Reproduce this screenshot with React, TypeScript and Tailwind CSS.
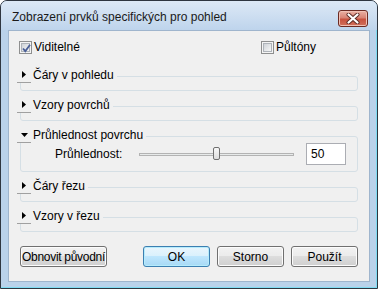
const font = "font-['Liberation_Sans',Arial,sans-serif]";

function CheckBox({ checked }: { checked?: boolean }) {
  return (
    <span className="relative flex h-[13px] w-[13px] shrink-0 items-center justify-center border border-[#8e8f8f] bg-[#f4f4f4]">
      <span className="h-[9px] w-[9px] border border-[#aeb3b9] bg-gradient-to-br from-[#cfd3d8] to-[#f7f7f7]" />
      {checked ? (
        <svg
          className="absolute left-[1px] top-[1px]"
          width="11"
          height="11"
          viewBox="0 0 11 11"
          aria-hidden="true"
        >
          <path
            d="M2 5.5 L4.3 8.2 L9 1.8"
            fill="none"
            stroke="#4a5f97"
            strokeWidth="1.8"
          />
        </svg>
      ) : null}
    </span>
  );
}

function Expander({ open }: { open?: boolean }) {
  return (
    <span className="flex h-[16px] w-[14px] shrink-0 items-center justify-center border-b border-[#a0a0a0]">
      {open ? (
        <svg width="7" height="4" viewBox="0 0 7 4" aria-hidden="true">
          <polygon points="0,0 7,0 3.5,4" fill="#000" />
        </svg>
      ) : (
        <svg width="4" height="7" viewBox="0 0 4 7" aria-hidden="true">
          <polygon points="0,0 4,3.5 0,7" fill="#000" />
        </svg>
      )}
    </span>
  );
}

function Section({
  title,
  open,
  children,
}: {
  title: string;
  open?: boolean;
  children?: React.ReactNode;
}) {
  return (
    <div
      className={`rounded-[3px] border border-[#d5dfe5] ${
        open ? "pb-[6px]" : "h-[15px]"
      }`}
    >
      <div className="-ml-[4px] -mt-[10px] flex h-[16px] w-fit items-center bg-[#f0f0f0] pr-[3px]">
        <Expander open={open} />
        <span className="ml-[2px] text-[12px] leading-[16px] text-black">
          {title}
        </span>
      </div>
      {children}
    </div>
  );
}

function Button({
  label,
  primary,
  className = "",
}: {
  label: string;
  primary?: boolean;
  className?: string;
}) {
  return (
    <button
      type="button"
      className={`flex h-[21px] items-center justify-center whitespace-nowrap rounded-[3px] border px-0 text-[12px] leading-none text-black ${
        primary
          ? "border-[#3c7fb1] bg-[linear-gradient(#eaf6fd_0%,#d9f0fc_50%,#bee6fd_50%,#a7d9f5_100%)] shadow-[inset_0_0_0_1px_#b6ecfc]"
          : "border-[#707070] bg-[linear-gradient(#f2f2f2_0%,#ebebeb_50%,#dddddd_50%,#cfcfcf_100%)] shadow-[inset_0_0_0_1px_#fcfcfc]"
      } ${className}`}
    >
      {label}
    </button>
  );
}

export default function App() {
  return (
    <div className={`h-[289px] w-[378px] overflow-hidden bg-white ${font}`}>
      <div className="flex h-full w-full flex-col rounded-t-[7px] border border-[#2f3640] bg-[#bad2ea] shadow-[inset_-1px_-1px_0_#7fdcf3]">
        <div className="flex h-[29px] shrink-0 items-start justify-between rounded-t-[6px] bg-gradient-to-b from-[#dde9f6] to-[#bed4ec] pl-[11px] pr-[9px]">
          <span className="mt-[8px] text-[12px] leading-[16px] text-[#1a1a1a]">
            Zobrazení prvků specifických pro pohled
          </span>
          <button
            type="button"
            aria-label="Zavřít"
            className="mt-[9px] flex h-[17px] w-[30px] items-center justify-center rounded-[3px] border border-[#6b2a22] bg-[linear-gradient(#eab1a4_0%,#d98475_45%,#c8523f_55%,#d0705c_100%)] shadow-[inset_0_0_0_1px_#f0c0b4]"
          >
            <svg width="14" height="11" viewBox="0 0 14 11" aria-hidden="true">
              <path
                d="M2.5 1.5 L11.5 9.5 M11.5 1.5 L2.5 9.5"
                stroke="#5a2a24"
                strokeWidth="4"
                strokeLinecap="round"
              />
              <path
                d="M2.5 1.5 L11.5 9.5 M11.5 1.5 L2.5 9.5"
                stroke="#ffffff"
                strokeWidth="2.2"
                strokeLinecap="round"
              />
            </svg>
          </button>
        </div>

        <div className="mx-[7px] flex flex-1 flex-col border border-[#9fb5cd] bg-[#f0f0f0] pt-[10px]">
          <div className="flex items-center pl-[10px]">
            <label className="flex w-[242px] items-center gap-[2px] text-[12px] leading-[13px] text-black">
              <CheckBox checked />
              Viditelné
            </label>
            <label className="flex items-center gap-[2px] text-[12px] leading-[13px] text-black">
              <CheckBox />
              Půltóny
            </label>
          </div>

          <div className="mt-[22px] flex flex-col gap-[15px] px-[11px]">
            <Section title="Čáry v pohledu" />
            <Section title="Vzory povrchů" />
            <Section title="Průhlednost povrchu" open>
              <div className="flex h-[22px] items-center pl-[34px]">
                <span className="w-[84px] text-[12px] leading-none text-black">
                  Průhlednost:
                </span>
                <div className="relative flex h-[22px] w-[155px] items-center">
                  <div className="h-[3px] w-full border border-[#b3b3b3] bg-[#e7eaea]" />
                  <div className="absolute left-[74px] top-[4px] h-[13px] w-[7px] rounded-[2px] border border-[#707070] bg-gradient-to-b from-[#f8f8f8] to-[#dcdcdc]" />
                </div>
                <div className="ml-[12px] flex h-[22px] w-[40px] items-center border border-[#abadb3] bg-white pl-[4px] text-[12px] text-black">
                  50
                </div>
              </div>
            </Section>
            <Section title="Čáry řezu" />
            <Section title="Vzory v řezu" />
          </div>

          <div className="mt-[14px] flex items-center px-[11px]">
            <Button
              label="Obnovit původní"
              className="w-[87px] text-[11.5px] tracking-[-0.3px]"
            />
            <div className="ml-auto flex gap-[7px]">
              <Button label="OK" primary className="w-[67px]" />
              <Button label="Storno" className="w-[67px]" />
              <Button label="Použít" className="w-[67px]" />
            </div>
          </div>
        </div>
        <div className="h-[6px] shrink-0" />
      </div>
    </div>
  );
}
